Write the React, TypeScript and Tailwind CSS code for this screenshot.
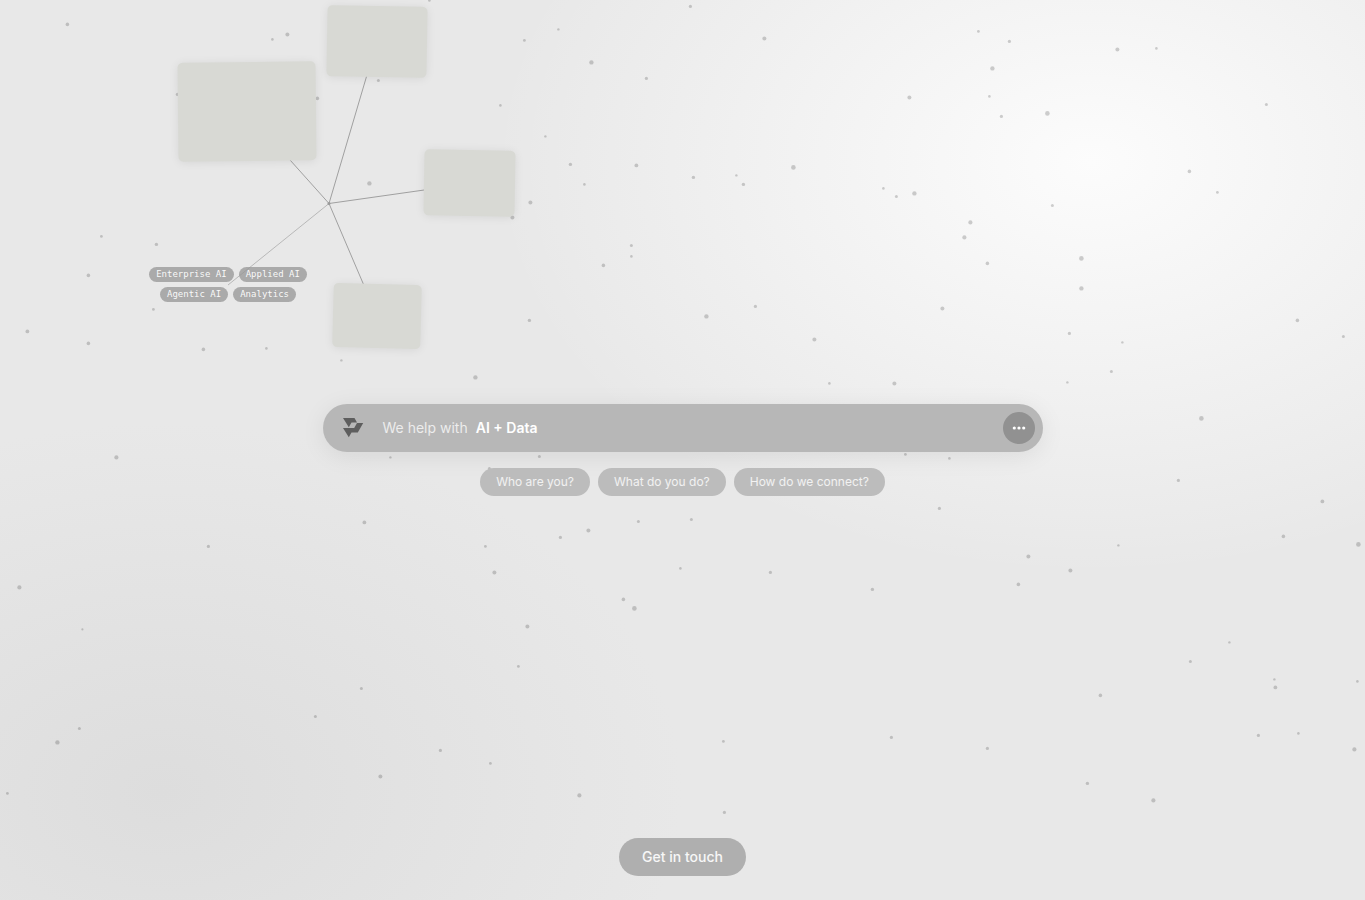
import React from "react";

type Dot = [x: number, y: number, r: number];

const DOTS: Dot[] = [
  [67, 24, 1.8], [272, 39, 1.3], [287, 34, 2], [429, 0, 1.3], [524, 40, 1.4], [558, 29, 1.2], [591, 62, 2.2],
  [646, 78, 1.6], [690, 6, 1.6], [764, 38, 2], [500, 105, 1.3], [545, 136, 1.2], [378, 80, 1.5], [317, 98, 1.8],
  [177, 94, 1.6], [369, 183, 2.2], [570, 164, 1.7], [584, 184, 1.3], [636, 165, 1.9], [693, 177, 1.7],
  [736, 175, 1.2], [743, 184, 1.7], [793, 167, 2.3], [530, 202, 2], [512, 217, 2], [631, 245, 1.5],
  [631, 256, 1.3], [603, 265, 1.8], [101, 236, 1.4], [156, 244, 1.7], [88, 275, 1.8], [153, 309, 1.4],
  [27, 331, 1.9], [88, 343, 1.8], [203, 349, 1.8], [266, 348, 1.3], [341, 360, 1.2], [475, 377, 2.2],
  [529, 320, 1.7], [706, 316, 2.2], [755, 306, 1.6], [814, 339, 2], [829, 383, 1.3], [894, 383, 2],
  [978, 31, 1.4], [1009, 41, 1.6], [992, 68, 2.2], [1117, 49, 2], [1156, 48, 1.3], [989, 96, 1.3],
  [909, 97, 2], [1001, 116, 1.6], [1047, 113, 2.3], [1266, 104, 1.5], [1189, 171, 1.8], [1217, 192, 1.4],
  [883, 188, 1.3], [896, 196, 1.5], [914, 193, 2.2], [1052, 205, 1.5], [970, 222, 2.1], [964, 237, 2.1],
  [987, 263, 1.8], [1081, 258, 2.3], [1081, 288, 2.2], [942, 308, 2], [1069, 333, 1.6], [1122, 342, 1.2],
  [1111, 371, 1.5], [1067, 382, 1.2], [1297, 320, 1.8], [1343, 336, 1.5], [1201, 418, 2.3], [116, 457, 2.1],
  [390, 457, 1.2], [539, 456, 1.5], [489, 468, 1.5], [905, 454, 1.4], [949, 458, 1.3], [1178, 480, 1.6],
  [1322, 501, 1.9], [939, 508, 1.6], [364, 522, 1.9], [588, 530, 2], [560, 537, 1.6], [638, 521, 1.5],
  [691, 519, 1.5], [208, 546, 1.6], [485, 546, 1.4], [494, 572, 2], [680, 568, 1.3], [770, 572, 1.6],
  [872, 589, 1.7], [623, 599, 1.8], [634, 608, 2.3], [527, 626, 2], [19, 587, 2.1], [82, 629, 1.1],
  [518, 666, 1.4], [361, 688, 1.5], [315, 716, 1.5], [57, 742, 2.2], [79, 728, 1.5], [7, 793, 1.4],
  [440, 750, 1.6], [380, 776, 2], [490, 763, 1.4], [579, 795, 2.1], [723, 741, 1.4], [724, 812, 1.6],
  [891, 737, 1.6], [987, 748, 1.6], [1028, 556, 2], [1070, 570, 2], [1018, 584, 1.8], [1118, 545, 1.2],
  [1283, 536, 1.8], [1358, 544, 2.3], [1229, 642, 1.2], [1190, 661, 1.5], [1274, 679, 1.2], [1275, 687, 1.9],
  [1357, 681, 1.3], [1100, 695, 1.8], [1258, 735, 1.6], [1298, 733, 1.3], [1354, 749, 2.1], [1087, 783, 1.7],
  [1153, 800, 2.1],
];

const CARD = "absolute rounded-[5px] bg-[#d8d9d4] shadow-[0_1px_10px_rgba(0,0,0,0.08)]";

const CARDS = [
  "left-[178px] top-[62px] h-[99px] w-[138px] -rotate-[0.6deg]",
  "left-[327px] top-[6px] h-[71px] w-[100px] rotate-1",
  "left-[424px] top-[150px] h-[66px] w-[91px] rotate-1",
  "left-[333px] top-[284px] h-[64px] w-[88px] rotate-[1.5deg]",
];

const TAGS = ["Enterprise AI", "Applied AI", "Agentic AI", "Analytics"];
const QUESTIONS = ["Who are you?", "What do you do?", "How do we connect?"];

function Particles() {
  return (
    <svg className="pointer-events-none absolute inset-0 h-full w-full" aria-hidden="true">
      <g transform="translate(0.4 0.4)" fill="#000" fillOpacity="0.18">
        {DOTS.map(([x, y, r]) => (
          <circle key={`${x}-${y}`} cx={x} cy={y} r={r} />
        ))}
      </g>
    </svg>
  );
}

function Constellation() {
  return (
    <div className="absolute left-0 top-0">
      <svg className="absolute left-0 top-0 h-[400px] w-[560px]" aria-hidden="true">
        <g stroke="#a0a0a0" strokeWidth="1">
          <path d="M329 203.500 L247 112" />
          <path d="M329 203.500 L377 41" />
          <path d="M329 203.500 L470 183.500" />
          <path d="M329 203.500 L377 316" />
          <path d="M329 203.500 L228 285" stroke="#b8b8b8" />
        </g>
        <circle cx="329" cy="203.500" r="1.500" fill="#999" />
      </svg>
      {CARDS.map((place) => (
        <div key={place} className={`${CARD} ${place}`} />
      ))}
      <ul className="absolute left-[148px] top-[267px] flex w-[160px] flex-wrap justify-center gap-[5px] font-['DejaVu_Sans_Mono',monospace] text-[9px] leading-[15px] text-white/95">
        {TAGS.map((tag) => (
          <li key={tag} className="rounded-full bg-[#969696]/75 px-[7px]">
            {tag}
          </li>
        ))}
      </ul>
    </div>
  );
}

function Logo() {
  return (
    <svg className="h-5 w-5 shrink-0 overflow-visible" viewBox="0 0 20 20" fill="#5e5e5e" aria-hidden="true">
      <path d="M0 0H11.500L14 4.500H8.500L5.800 9.300Z" />
      <path d="M14 5H20.200L14.800 14.500H8.500L5.800 19.300L0 10H11.200Z" />
    </svg>
  );
}

export default function App() {
  return (
    <div className="relative grid min-h-screen grid-rows-[1fr_auto_1fr] overflow-hidden bg-[#e8e8e8] bg-[radial-gradient(44%_46%_at_80%_18%,#fcfcfc_0%,#e8e8e800_100%),radial-gradient(38%_41%_at_12%_88%,#dddddd_0%,#e8e8e8_100%)] font-['Inter',sans-serif]">
      <Particles />
      <Constellation />

      <main className="relative row-start-2 flex flex-col items-center gap-4 px-4">
        <form
          className="flex h-12 w-full max-w-[720px] items-center rounded-full bg-[#b7b7b7] pl-5 pr-2 shadow-[0_4px_24px_rgba(0,0,0,0.08)]"
          onSubmit={(e) => e.preventDefault()}
        >
          <Logo />
          <p className="ml-5 flex flex-1 gap-2 text-sm text-white/75">
            <span>We help with</span>
            <strong className="font-semibold text-white">AI + Data</strong>
          </p>
          <button
            type="submit"
            aria-label="More"
            className="flex size-8 items-center justify-center rounded-full bg-[#919191]"
          >
            <svg className="size-4" viewBox="0 0 16 16" fill="#fff" aria-hidden="true">
              <circle cx="3.300" cy="8" r="1.600" />
              <circle cx="8" cy="8" r="1.600" />
              <circle cx="12.700" cy="8" r="1.600" />
            </svg>
          </button>
        </form>
        <div className="flex flex-wrap justify-center gap-2">
          {QUESTIONS.map((question) => (
            <button
              key={question}
              type="button"
              className="h-7 rounded-full bg-[#bcbcbc] px-4 text-xs text-white/80"
            >
              {question}
            </button>
          ))}
        </div>
      </main>

      <footer className="relative row-start-3 flex items-end justify-center pb-6">
        <button type="button" className="h-[38px] rounded-full bg-[#afafaf] px-[23px] text-sm font-medium text-white/90">
          Get in touch
        </button>
      </footer>
    </div>
  );
}
